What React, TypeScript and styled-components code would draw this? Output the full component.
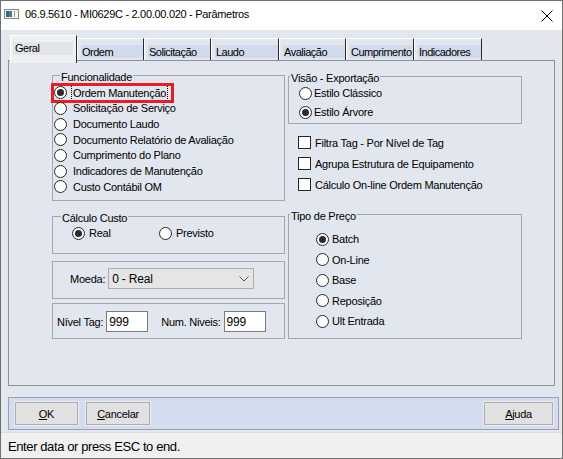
import React from "react";
import styled, { createGlobalStyle } from "styled-components";

const BG = "#e2e6ee";

const Global = createGlobalStyle`
  html, body { margin: 0; padding: 0; background: #ffffff; }
  * { box-sizing: border-box; }
`;

const Window = styled.div`
  width: 563px;
  height: 459px;
  border: 1px solid #6f6f6f;
  background: ${BG};
  display: flex;
  flex-direction: column;
  overflow: hidden;
  font-family: "Liberation Sans", Arial, sans-serif;
  font-size: 11px;
  letter-spacing: -0.25px;
  color: #000;
`;

const TitleBar = styled.div`
  height: 29px;
  flex: none;
  background: #fff;
  display: flex;
  align-items: flex-start;
  padding: 5px 0 0 3px;
`;

const TitleIcon = styled.svg`
  margin-top: 3px;
  flex: none;
`;

const TitleText = styled.span`
  margin-left: 6px;
  line-height: 16px;
  font-size: 11px;
  letter-spacing: -0.3px;
`;

const CloseBox = styled.div`
  margin-left: auto;
  width: 30px;
  height: 16px;
  display: flex;
  align-items: center;
  justify-content: center;
  margin-top: 2px;
`;

const Body = styled.div`
  flex: none;
  height: 402px;
  display: flex;
  flex-direction: column;
  padding: 5px 3px 2px 7px;
`;

const TabStrip = styled.div`
  height: 25px;
  flex: none;
  display: flex;
  align-items: flex-end;
  padding-left: 2px;
  margin-right: 4px;
`;

const Tab = styled.div<{ $active?: boolean; $w: number }>`
  width: ${(p) => p.$w}px;
  flex: none;
  height: ${(p) => (p.$active ? 28 : 22)}px;
  margin-bottom: ${(p) => (p.$active ? -3 : 0)}px;
  position: relative;
  z-index: ${(p) => (p.$active ? 2 : 0)};
  background: ${(p) => (p.$active ? "#eff0f3" : BG)};
  border-top: 1px solid #ffffff;
  border-left: 1px solid #ffffff;
  border-right: 1px solid #2a2a2a;
  padding: ${(p) => (p.$active ? "6px 3px 0 2px" : "6px 0 0 3px")};
`;

const TabLabel = styled.div<{ $active?: boolean }>`
  height: 13px;
  line-height: 13px;
  padding-top: ${(p) => (p.$active ? 0 : 1)}px;
  padding-left: ${(p) => (p.$active ? 2 : 1)}px;
  background: ${(p) => (p.$active ? "#e3e4e9" : "#d2dbee")};
  white-space: nowrap;
  font-size: 11px;
  letter-spacing: -0.5px;
`;

const Panel = styled.div`
  height: 326px;
  flex: none;
  margin-right: 4px;
  border: 1px solid #8e9199;
  display: flex;
  gap: 3px;
  padding-left: 43px;
`;

const Column = styled.div<{ $w: number }>`
  width: ${(p) => p.$w}px;
  flex: none;
  display: flex;
  flex-direction: column;
`;

const GroupBox = styled.div<{ $h: number; $mt: number; $pt?: number; $pl?: number }>`
  height: ${(p) => p.$h}px;
  margin-top: ${(p) => p.$mt}px;
  padding-top: ${(p) => p.$pt ?? 0}px;
  padding-left: ${(p) => p.$pl ?? 0}px;
  border: 1px solid #a3a6ad;
  display: flex;
  flex-direction: column;
  flex: none;
`;

const Caption = styled.div<{ $ml: number }>`
  align-self: flex-start;
  margin: -5px 0 0 ${(p) => p.$ml}px;
  padding: 0 1px;
  height: 13px;
  line-height: 13px;
  background: ${BG};
  white-space: nowrap;
`;

const OptionList = styled.div<{ $mt?: number; $gap?: number }>`
  display: flex;
  flex-direction: column;
  margin-top: ${(p) => p.$mt ?? 0}px;
  gap: ${(p) => p.$gap ?? 0}px;
`;

const OptionRow = styled.div<{ $h: number; $pl: number; $gap: number }>`
  position: relative;
  height: ${(p) => p.$h}px;
  display: flex;
  align-items: center;
  padding-left: ${(p) => p.$pl}px;
  gap: ${(p) => p.$gap}px;
  white-space: nowrap;
  flex: none;
`;

const InlineRow = styled.div<{ $h: number; $pl: number }>`
  height: ${(p) => p.$h}px;
  display: flex;
  align-items: center;
  padding-left: ${(p) => p.$pl}px;
  flex: none;
`;

const InlineOption = styled.div<{ $w?: number }>`
  width: ${(p) => (p.$w ? `${p.$w}px` : "auto")};
  display: flex;
  align-items: center;
  gap: 2px;
  flex: none;
`;

const Radio = styled.span<{ $on?: boolean }>`
  width: 13px;
  height: 13px;
  border-radius: 50%;
  border: 1px solid #262626;
  background: #fff;
  flex: none;
  display: inline-flex;
  align-items: center;
  justify-content: center;
  &::after {
    content: "";
    width: 7px;
    height: 7px;
    border-radius: 50%;
    background: #2b2b2b;
    display: ${(p) => (p.$on ? "block" : "none")};
  }
`;

const Check = styled.span`
  width: 13px;
  height: 13px;
  border: 1px solid #262626;
  background: #fff;
  flex: none;
`;

const Label = styled.span<{ $focus?: boolean }>`
  padding: 0 1px;
  height: 16px;
  line-height: 14px;
  border: 1px ${(p) => (p.$focus ? "dotted #000" : "solid transparent")};
`;

const Highlight = styled.div`
  position: absolute;
  left: -2px;
  top: -2px;
  width: 123px;
  height: 20px;
  border: 3px solid #ec1c24;
  pointer-events: none;
`;

const FieldLine = styled.div<{ $pl: number }>`
  display: flex;
  align-items: center;
  padding-left: ${(p) => p.$pl}px;
  height: 21px;
`;

const FieldLabel = styled.span<{ $ml?: number }>`
  margin-left: ${(p) => p.$ml ?? 0}px;
  margin-right: 3px;
  white-space: nowrap;
`;

const Select = styled.div`
  width: 146px;
  height: 21px;
  border: 1px solid #acacac;
  background: #e5e5e5;
  display: flex;
  align-items: center;
  padding-left: 3px;
  font-size: 12px;
  letter-spacing: -0.2px;
`;

const Chevron = styled.svg`
  margin-left: auto;
  margin-right: 4px;
`;

const TextInput = styled.div`
  width: 42px;
  height: 21px;
  border: 1px solid #7a7a7a;
  background: #fff;
  display: flex;
  align-items: center;
  padding-left: 2px;
  font-size: 12px;
  letter-spacing: -0.2px;
`;

const ButtonBar = styled.div`
  height: 33px;
  flex: none;
  margin-top: 11px;
  border: 1px solid #9ba1ae;
  background: #d4ddef;
  display: flex;
  align-items: center;
  padding: 0 5px 0 6px;
  gap: 8px;
`;

const Button = styled.div<{ $w: number; $push?: boolean }>`
  width: ${(p) => p.$w}px;
  height: 23px;
  margin-left: ${(p) => (p.$push ? "auto" : "0")};
  background: #e1e1e1;
  border: 1px solid #adadad;
  box-shadow: 0 0 0 1px #e9ecf3;
  display: flex;
  align-items: center;
  justify-content: center;
  letter-spacing: -0.3px;
`;

const StatusBar = styled.div`
  height: 26px;
  flex: none;
  background: #f0f0f0;
  border-top: 1px solid #dcdcdc;
  display: flex;
  align-items: center;
  padding: 2px 0 0 7px;
  font-size: 13px;
  letter-spacing: -0.4px;
`;

const tabs = [
  { t: "Geral", w: 67, a: true },
  { t: "Ordem", w: 67 },
  { t: "Solicitação", w: 67 },
  { t: "Laudo", w: 68 },
  { t: "Avaliação", w: 67 },
  { t: "Cumprimento", w: 68 },
  { t: "Indicadores", w: 68 },
];

const funcs = [
  "Ordem Manutenção",
  "Solicitação de Serviço",
  "Documento Laudo",
  "Documento Relatório de Avaliação",
  "Cumprimento do Plano",
  "Indicadores de Manutenção",
  "Custo Contábil OM",
];

const checks = ["Filtra Tag - Por Nível de Tag", "Agrupa Estrutura de Equipamento", "Cálculo On-line Ordem Manutenção"];

const precos = ["Batch", "On-Line", "Base", "Reposição", "Ult Entrada"];

export default function App() {
  return (
    <>
      <Global />
      <Window>
        <TitleBar>
          <TitleIcon width="15" height="10" viewBox="0 0 15 10">
            <rect x="0.5" y="0.5" width="14" height="9" fill="#f4f4f4" stroke="#8a8a8a" />
            <rect x="2" y="2" width="6" height="6" fill="#3f8577" />
            <rect x="2" y="2" width="3" height="6" fill="#2f6b88" />
            <rect x="10" y="2" width="1" height="6" fill="#9a9a9a" />
          </TitleIcon>
          <TitleText>06.9.5610 - MI0629C - 2.00.00.020 - Parâmetros</TitleText>
          <CloseBox>
            <svg width="12" height="12" viewBox="0 0 12 12">
              <path d="M0.5 0.5 L11.5 11.5 M11.5 0.5 L0.5 11.5" stroke="#000" strokeWidth="1" />
            </svg>
          </CloseBox>
        </TitleBar>
        <Body>
          <TabStrip>
            {tabs.map((t) => (
              <Tab key={t.t} $w={t.w} $active={t.a}>
                <TabLabel $active={t.a}>{t.t}</TabLabel>
              </Tab>
            ))}
          </TabStrip>
          <Panel>
            <Column $w={233}>
              <GroupBox $h={126} $mt={14}>
                <Caption $ml={7}>Funcionalidade</Caption>
                <OptionList $mt={1}>
                  {funcs.map((f, i) => (
                    <OptionRow key={f} $h={15.667} $pl={1} $gap={4}>
                      <Radio $on={i === 0} />
                      <Label $focus={i === 0}>{f}</Label>
                      {i === 0 && <Highlight />}
                    </OptionRow>
                  ))}
                </OptionList>
              </GroupBox>
              <GroupBox $h={38} $mt={15}>
                <Caption $ml={8}>Cálculo Custo</Caption>
                <InlineRow $h={16} $pl={19}>
                  <InlineOption $w={87}>
                    <Radio $on />
                    <Label>Real</Label>
                  </InlineOption>
                  <InlineOption>
                    <Radio />
                    <Label>Previsto</Label>
                  </InlineOption>
                </InlineRow>
              </GroupBox>
              <GroupBox $h={38} $mt={7} $pt={6}>
                <FieldLine $pl={17}>
                  <FieldLabel>Moeda:</FieldLabel>
                  <Select>
                    0 - Real
                    <Chevron width="10" height="6" viewBox="0 0 10 6">
                      <path d="M0.5 0.5 L5 5 L9.5 0.5" fill="none" stroke="#555" strokeWidth="1" />
                    </Chevron>
                  </Select>
                </FieldLine>
              </GroupBox>
              <GroupBox $h={36} $mt={4} $pt={7}>
                <FieldLine $pl={4}>
                  <FieldLabel>Nível Tag:</FieldLabel>
                  <TextInput>999</TextInput>
                  <FieldLabel $ml={13}>Num. Niveis:</FieldLabel>
                  <TextInput>999</TextInput>
                </FieldLine>
              </GroupBox>
            </Column>
            <Column $w={234}>
              <GroupBox $h={48} $mt={15}>
                <Caption $ml={1}>Visão - Exportação</Caption>
                <OptionList $gap={3}>
                  <OptionRow $h={16} $pl={10} $gap={0}>
                    <Radio />
                    <Label>Estilo Clássico</Label>
                  </OptionRow>
                  <OptionRow $h={16} $pl={10} $gap={0}>
                    <Radio $on />
                    <Label>Estilo Árvore</Label>
                  </OptionRow>
                </OptionList>
              </GroupBox>
              <OptionList $mt={8}>
                {checks.map((c) => (
                  <OptionRow key={c} $h={21} $pl={10} $gap={2}>
                    <Check />
                    <Label>{c}</Label>
                  </OptionRow>
                ))}
              </OptionList>
              <GroupBox $h={125} $mt={19}>
                <Caption $ml={1}>Tipo de Preço</Caption>
                <OptionList $mt={6}>
                  {precos.map((p, i) => (
                    <OptionRow key={p} $h={20.5} $pl={27} $gap={1}>
                      <Radio $on={i === 0} />
                      <Label>{p}</Label>
                    </OptionRow>
                  ))}
                </OptionList>
              </GroupBox>
            </Column>
          </Panel>
          <ButtonBar>
            <Button $w={63}>
              <span>
                <u>O</u>K
              </span>
            </Button>
            <Button $w={64}>
              <span>
                <u>C</u>ancelar
              </span>
            </Button>
            <Button $w={69} $push>
              <span>
                <u>A</u>juda
              </span>
            </Button>
          </ButtonBar>
        </Body>
        <StatusBar>Enter data or press ESC to end.</StatusBar>
      </Window>
    </>
  );
}
